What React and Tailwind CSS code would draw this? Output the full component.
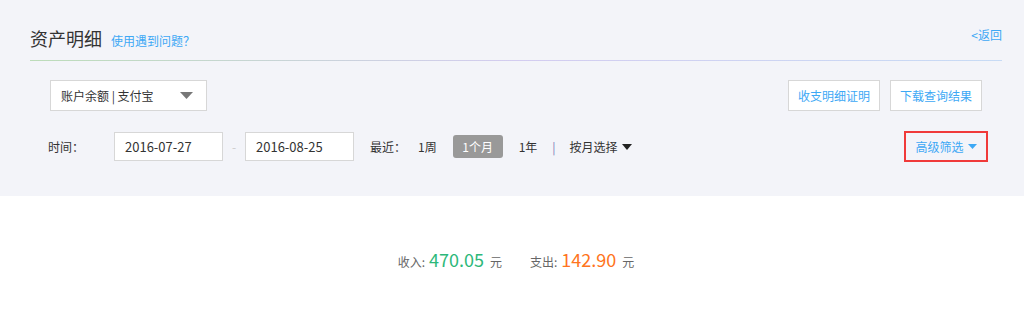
import React from "react";

const font = { fontFamily: '"Noto Sans CJK SC", "Noto Sans", sans-serif' };

export default function App() {
  return (
    <div className="w-[1024px] h-[317px] bg-white text-[12px] text-[#333]" style={font}>
      <div className="h-[196px] bg-[#f3f4f9] pl-[30px] pr-[22px] flex flex-col">
        {/* header */}
        <div className="h-[60px] flex items-end pb-[10px]">
          <div className="flex items-baseline">
            <span className="text-[18px] leading-[24px] text-[#333]">资产明细</span>
            <a className="ml-[9px] text-[12px] text-[#3da8f5]">使用遇到问题？</a>
          </div>
          <a className="ml-auto mb-[6px] text-[12px] text-[#3da8f5]">&lt;返回</a>
        </div>
        <div className="h-px bg-gradient-to-r from-[#bcdcb9] via-[#d3ccf0] to-[#c7dbf5]" />
        {/* row 1 */}
        <div className="mt-[19px] pl-[20px] pr-[20px] flex items-center">
          <div className="w-[157px] h-[31px] bg-white border border-[#d7d7d7] flex items-center pl-[10px] pr-[13px]">
            <span>账户余额 | 支付宝</span>
            <svg className="ml-auto" width="13" height="7" viewBox="0 0 13 7">
              <path d="M0 0H13L6.5 7Z" fill="#777" />
            </svg>
          </div>
          <div className="ml-auto flex gap-[10px]">
            <button className="w-[92px] h-[31px] bg-white border border-[#d7d7d7] text-[#3da8f5]">收支明细证明</button>
            <button className="w-[92px] h-[31px] bg-white border border-[#d7d7d7] text-[#3da8f5]">下载查询结果</button>
          </div>
        </div>
        {/* row 2 */}
        <div className="mt-[20px] pl-[18px] pr-[14px] flex items-center">
          <span className="w-[66px]">时间：</span>
          <div className="w-[109px] h-[29px] bg-white border border-[#d7d7d7] flex items-center pl-[10px] text-[13px]">2016-07-27</div>
          <span className="w-[22px] text-center text-[#ccc]">-</span>
          <div className="w-[109px] h-[29px] bg-white border border-[#d7d7d7] flex items-center pl-[10px] text-[13px]">2016-08-25</div>
          <span className="ml-[16px]">最近：</span>
          <span className="ml-[12px]">1周</span>
          <span className="ml-[16px] w-[50px] h-[23px] rounded-[3px] bg-[#999] text-white flex items-center justify-center">1个月</span>
          <span className="ml-[16px]">1年</span>
          <span className="ml-[15px] text-[#7b7bb8]">|</span>
          <span className="ml-[14px] flex items-center">
            按月选择
            <svg className="ml-[4px]" width="10" height="6" viewBox="0 0 10 6">
              <path d="M0 0H10L5 6Z" fill="#222" />
            </svg>
          </span>
          <div className="ml-auto w-[84px] h-[31px] border-2 border-[#f03a3a] flex items-center justify-center text-[#3da8f5]">
            高级筛选
            <svg className="ml-[4px]" width="9" height="5" viewBox="0 0 9 5">
              <path d="M0 0H9L4.5 5Z" fill="#3da8f5" />
            </svg>
          </div>
        </div>
      </div>
      <div className="pt-[50px] pl-[8px] flex justify-center items-baseline">
        <span className="text-[#666]">收入:</span>
        <span className="ml-[4px] text-[18px] text-[#2db87a]">470.05</span>
        <span className="ml-[6px] text-[#666]">元</span>
        <span className="ml-[28px] text-[#666]">支出:</span>
        <span className="ml-[4px] text-[18px] text-[#ff7420]">142.90</span>
        <span className="ml-[6px] text-[#666]">元</span>
      </div>
    </div>
  );
}
